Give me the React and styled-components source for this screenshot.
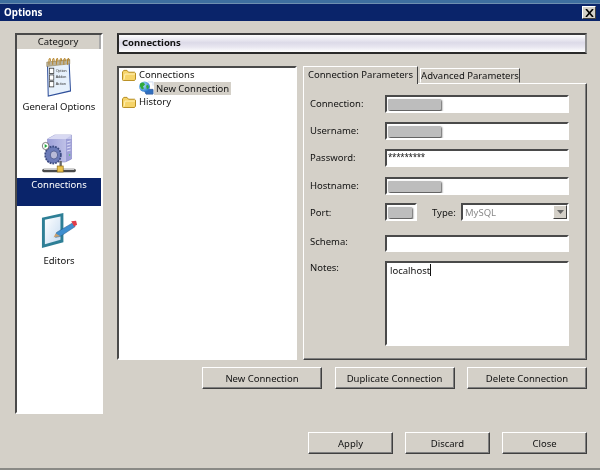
import React from "react";
import styled, { createGlobalStyle, css } from "styled-components";

const Global = createGlobalStyle`
  html, body { margin: 0; padding: 0; background: #d4d0c8; }
  * { box-sizing: border-box; }
`;

const inset = css`
  border-style: solid;
  border-width: 2px;
  border-color: #4a4a4a #fff #fff #4a4a4a;
`;
const raised = css`
  border: 1px solid; border-color: #fff #404040 #404040 #fff;
  box-shadow: inset -1px -1px 0 #808080;
`;

const Win = styled.div`
  width: 600px; height: 470px; background: #d4d0c8; display: flex; flex-direction: column;
  font-family: "Noto Sans", sans-serif; font-size: 9.5px; color: #111; overflow: hidden;
  border-bottom: 2px solid #8a8a86; filter: blur(.25px);
`;
const TopStrip = styled.div`height: 4px; background: #3f6f9f; flex: none; border-bottom: 1px solid #6f8fb0;`;
const TitleBar = styled.div`
  height: 17px; flex: none; background: #0a246a; color: #fff; display: flex; align-items: center;
  justify-content: space-between; padding: 0 4px;
  font-weight: 700; font-size: 9.8px;
`;
const CloseBtn = styled.div`
  width: 14px; height: 13px; background: #d4d0c8; display: flex; align-items: center; justify-content: center;
  border: 1px solid; border-color: #fff #404040 #404040 #fff;
`;
const Body = styled.div`display: flex; gap: 14px; padding: 12px 13px 0 15px; align-items: flex-start;`;

const Sidebar = styled.div`
  ${inset}; width: 88px; height: 381px; background: #fff; display: flex; flex-direction: column; align-items: stretch; flex: none;
`;
const CatHead = styled.div`height: 14px; background: #d4d0c8; border-right: 2px solid #aaa; display: flex; align-items: center; justify-content: center; line-height: 1; flex: none;`;
const CatItem = styled.div`
  display: flex; flex-direction: column; align-items: center; padding-top: ${p => p.$pad}px;
  svg { display: block; flex: none; }
`;
const CatLabel = styled.div`
  width: 100%; text-align: center; line-height: 13px; margin-top: ${p => p.$gap ?? 3}px;
  ${p => p.$sel && css`background: #0a246a; color: #fff; height: 28px;`}
`;

const Main = styled.div`width: 470px; display: flex; flex-direction: column; flex: none;`;
const Header = styled.div`
  height: 21px; border: 2px solid #2a2a2a; border-right-color: #8c8c8c; border-top-color: #3c3c3c;
  background: linear-gradient(180deg, #fff 0%, #dcdae8 45%, #e8e6f0 70%, #fff 100%);
  font-weight: 700; display: flex; align-items: center; padding: 0 0 2px 3px;
`;
const Panes = styled.div`display: flex; gap: 6px; margin-top: 12px; height: 294px;`;
const Tree = styled.div`
  ${inset}; width: 180px; background: #fff; padding-left: 2px; display: flex; flex-direction: column;
`;
const TreeRow = styled.div`
  display: flex; align-items: center; height: 13.5px; padding-left: ${p => p.$indent}px; gap: ${p => p.$gap ?? 1}px;
  svg { flex: none; }
`;
const TreeText = styled.span`
  line-height: 13.5px; padding: 0 2px; white-space: nowrap;
  ${p => p.$sel && css`background: #d4d0c8;`}
`;
const Tabs = styled.div`width: 284px; display: flex; flex-direction: column;`;
const TabStrip = styled.div`display: flex; align-items: flex-end; height: 17px; flex: none;`;
const Tab = styled.div`
  display: flex; align-items: center; justify-content: center; white-space: nowrap;
  border: 1px solid; border-color: #fff #404040 transparent #fff; background: #d4d0c8;
  width: ${p => p.$w}px; height: ${p => p.$active ? 18 : 15}px; margin-left: ${p => p.$active ? 0 : 2}px;
  ${p => p.$active && css`margin-bottom: -1px; position: relative; z-index: 1; border-bottom: 0; padding-bottom: 2px;`}
`;
const Panel = styled.div`
  ${raised}; flex: 1; padding: 11px 0 0 6px; display: flex; flex-direction: column;
`;
const Row = styled.div`display: flex; align-items: ${p => p.$start ? "flex-start" : "center"}; margin-top: ${p => p.$top ?? 0}px;`;
const Label = styled.div`
  width: ${p => p.$w ?? 75}px; flex: none; padding-bottom: ${p => p.$up ?? 2}px;
  ${p => p.$pad && `padding-left: ${p.$pad}px;`}
`;
const Input = styled.div`
  ${inset}; width: ${p => p.$w ?? 184}px; height: ${p => p.$h ?? 18}px; background: #fff; flex: none;
  display: flex; ${p => !p.$tall && "align-items: center;"} overflow: hidden;
  padding: ${p => p.$tall ? "1px 0 0 3px" : "0 0 0 1px"}; line-height: 13px;
`;
const Mask = styled.div`
  width: ${p => p.$w ?? 53}px; height: 11px; background: #bdbdbd; border-radius: 1px; filter: blur(.6px);
  box-shadow: 1px 1.5px 2px #5c5c5c; flex: none;
`;
const Stars = styled.span`font-size: 8px; letter-spacing: -.3px; line-height: 10px; margin-top: -2px;`;
const Caret = styled.span`display: inline-block; width: 1px; height: 12px; background: #111;`;
const Select = styled.div`
  ${inset}; width: 108px; height: 18px; background: #fff; flex: none; display: flex; align-items: center; justify-content: space-between;
  color: #8a8a8a; padding-left: 2px;
`;
const Arrow = styled.div`
  width: 14px; height: 14px; background: #d4d0c8; border: 1px solid; border-color: #fff #404040 #404040 #fff;
  display: flex; align-items: center; justify-content: center;
`;
const ButtonRow = styled.div`display: flex; justify-content: flex-end; gap: ${p => p.$gap ?? 12}px; margin-top: ${p => p.$top}px;`;
const Button = styled.div`
  ${raised}; width: ${p => p.$w}px; height: 22px; flex: none; display: flex; align-items: center; justify-content: center;
  background: #d4d0c8;
`;

const Folder = () => (
  <svg width="14" height="12" viewBox="0 0 14 13" preserveAspectRatio="none">
    <path d="M.5 3V11.5Q.5 12.5 1.5 12.5H12.5L13.5 11V4.5L12.5 3.5H6.5L5 1.5H2Z" fill="#f6d469" stroke="#b58a1c" />
    <path d="M2 11.5L3 5.5H13" fill="none" stroke="#fff3b8" />
  </svg>
);

const Globe = () => (
  <svg width="16" height="14" viewBox="0 0 16 15" preserveAspectRatio="none">
    <defs>
      <radialGradient id="gb" cx=".35" cy=".35" r=".8"><stop offset="0" stopColor="#b6e6ff" /><stop offset="1" stopColor="#1468c8" /></radialGradient>
    </defs>
    <path d="M6 9H15V14H8Z" fill="#2f6fc0" stroke="#3a66a8" />
    <circle cx="6.5" cy="6" r="5.5" fill="url(#gb)" />
    <path d="M2 3Q4 1 6 2L7 4L5 6L6 8L4 9L2 6Z" fill="#2fa83a" />
    <path d="M8 5L10 4L11 7L9 9Z" fill="#2fa83a" />
    <path d="M10 1H15V5" fill="none" stroke="#cfdcf0" />
  </svg>
);

const Notepad = () => (
  <svg width="26" height="41" viewBox="2 1 35 47" preserveAspectRatio="none">
    <path d="M4 9L33 6L35 41L5 47Z" fill="#e6f0fb" stroke="#2f4f9a" strokeWidth="1.4" />
    <path d="M3 8L34 5L34 10L3 13Z" fill="#b8b3a0" stroke="#8a7440" strokeWidth=".6" />
    {[6, 11, 16, 21, 26, 31].map(x => (
      <path key={x} d={`M${x} 11V5Q${x + 2} 2 ${x + 2} 7`} fill="none" stroke="#b5842a" strokeWidth="1.3" />
    ))}
    {[[19, "Option"], [27, "Addon"], [35, "Action"]].map(([y, t], i) => (
      <g key={t}>
        <rect x="6.5" y={y - 4 - i * .3} width="6" height="6" fill="#fff" stroke="#333" strokeWidth=".9" />
        <text x="15" y={y - i * .3} fontSize="5" fontFamily="Liberation Sans" fill="#333">{t}</text>
      </g>
    ))}
  </svg>
);

const Server = () => (
  <svg width="37" height="40" viewBox="0 0 40 40" preserveAspectRatio="none">
    <defs>
      <linearGradient id="sv" x1="0" x2="1"><stop offset="0" stopColor="#9c9fd8" /><stop offset="1" stopColor="#c9cbec" /></linearGradient>
    </defs>
    <path d="M7 5L15 1H33L33 25L26 28H7Z" fill="url(#sv)" stroke="#8689c4" strokeWidth=".6" />
    <path d="M7 5L15 1H33L27 5Z" fill="#d8d9f2" />
    <path d="M27 5H33V25L27 28Z" fill="#7d80c6" opacity=".55" />
    <path d="M28 8L32 7M28 11L32 10M28 14L32 13M28 17L32 16" stroke="#dfe0fa" strokeWidth="1" />
    <circle cx="31" cy="21" r=".7" fill="#3fd04a" />
    <circle cx="13" cy="21" r="8.5" fill="#6c7bb8" stroke="#3b4a80" strokeDasharray="2 1" strokeWidth="1.8" />
    <circle cx="14" cy="21" r="4" fill="#b9bbd8" stroke="#3b4a80" strokeWidth=".7" />
    <circle cx="5" cy="12" r="3.6" fill="#fff" stroke="#444" strokeWidth=".7" />
    <path d="M4 10L7 12L4 14Z" fill="#1fa83a" />
    <path d="M3 36.5H36" stroke="#4a4a4a" strokeWidth="3.4" strokeLinecap="round" />
    <path d="M3 35.5H36" stroke="#d0d0d0" strokeWidth="1" />
    <rect x="20" y="27" width="2.5" height="6" fill="#666" />
    <rect x="17.5" y="32" width="6.5" height="6" fill="#eac04a" stroke="#8a6a1a" strokeWidth=".7" />
  </svg>
);

const Editor = () => (
  <svg width="39" height="37" viewBox="0 0 40 38" preserveAspectRatio="none">
    <defs>
      <linearGradient id="ed" x1="0" y1="0" x2="1" y2="1"><stop offset="0" stopColor="#fff" /><stop offset="1" stopColor="#c6dcf2" /></linearGradient>
    </defs>
    <path d="M2 6L24 1V31L2 37Z" fill="#2e7f96" />
    <path d="M5 8L21 4.5V28.5L5 33Z" fill="url(#ed)" />
    <path d="M17 21L33 11.5L36 15L21 25L16 26Z" fill="#3f8fd0" stroke="#245c8c" strokeWidth=".6" />
    <path d="M32 9.5L37 9L38 13L35 15Z" fill="#e03c4a" />
    <path d="M16 22L21 25L14 26Z" fill="#c9a070" />
  </svg>
);

const X = () => (
  <svg width="9" height="8" viewBox="0 0 9 8"><path d="M1 0L8 8M8 0L1 8" stroke="#000" strokeWidth="1.6" fill="none" /></svg>
);

export default function App() {
  return (
    <Win>
      <Global />
      <TopStrip />
      <TitleBar>
        <span>Options</span>
        <CloseBtn><X /></CloseBtn>
      </TitleBar>
      <Body>
        <Sidebar>
          <CatHead>Category</CatHead>
          <CatItem $pad={7}><Notepad /><CatLabel>General Options</CatLabel></CatItem>
          <CatItem $pad={21}><Server /><CatLabel $sel $gap={4}>Connections</CatLabel></CatItem>
          <CatItem $pad={6}><Editor /><CatLabel $gap={5}>Editors</CatLabel></CatItem>
        </Sidebar>
        <Main>
          <Header>Connections</Header>
          <Panes>
            <Tree>
              <TreeRow $indent={1}><Folder /><TreeText>Connections</TreeText></TreeRow>
              <TreeRow $indent={17} $gap={0}><Globe /><TreeText $sel>New Connection</TreeText></TreeRow>
              <TreeRow $indent={1}><Folder /><TreeText>History</TreeText></TreeRow>
            </Tree>
            <Tabs>
              <TabStrip>
                <Tab $active $w={115}>Connection Parameters</Tab>
                <Tab $w={100}>Advanced Parameters</Tab>
              </TabStrip>
              <Panel>
                <Row><Label>Connection:</Label><Input><Mask /></Input></Row>
                <Row $top={9}><Label>Username:</Label><Input><Mask /></Input></Row>
                <Row $top={9}><Label>Password:</Label><Input><Stars>*********</Stars></Input></Row>
                <Row $top={10}><Label>Hostname:</Label><Input><Mask /></Input></Row>
                <Row $top={8}>
                  <Label $up={0}>Port:</Label>
                  <Input $w={32}><Mask $w={24} /></Input>
                  <Label $w={44} $pad={15} $up={0}>Type:</Label>
                  <Select>MySQL<Arrow><svg width="7" height="4" viewBox="0 0 7 4"><path d="M0 0H7L3.5 4Z" fill="#666" /></svg></Arrow></Select>
                </Row>
                <Row $top={14}><Label $up={4}>Schema:</Label><Input $h={17} /></Row>
                <Row $top={9} $start><Label $up={0}>Notes:</Label><Input $h={85} $tall>localhost<Caret /></Input></Row>
              </Panel>
            </Tabs>
          </Panes>
          <ButtonRow $top={7} $gap={12.5}>
            <Button $w={120}>New Connection</Button>
            <Button $w={120}>Duplicate Connection</Button>
            <Button $w={120}>Delete Connection</Button>
          </ButtonRow>
          <ButtonRow $top={43}>
            <Button $w={85}>Apply</Button>
            <Button $w={85}>Discard</Button>
            <Button $w={85}>Close</Button>
          </ButtonRow>
        </Main>
      </Body>
    </Win>
  );
}
